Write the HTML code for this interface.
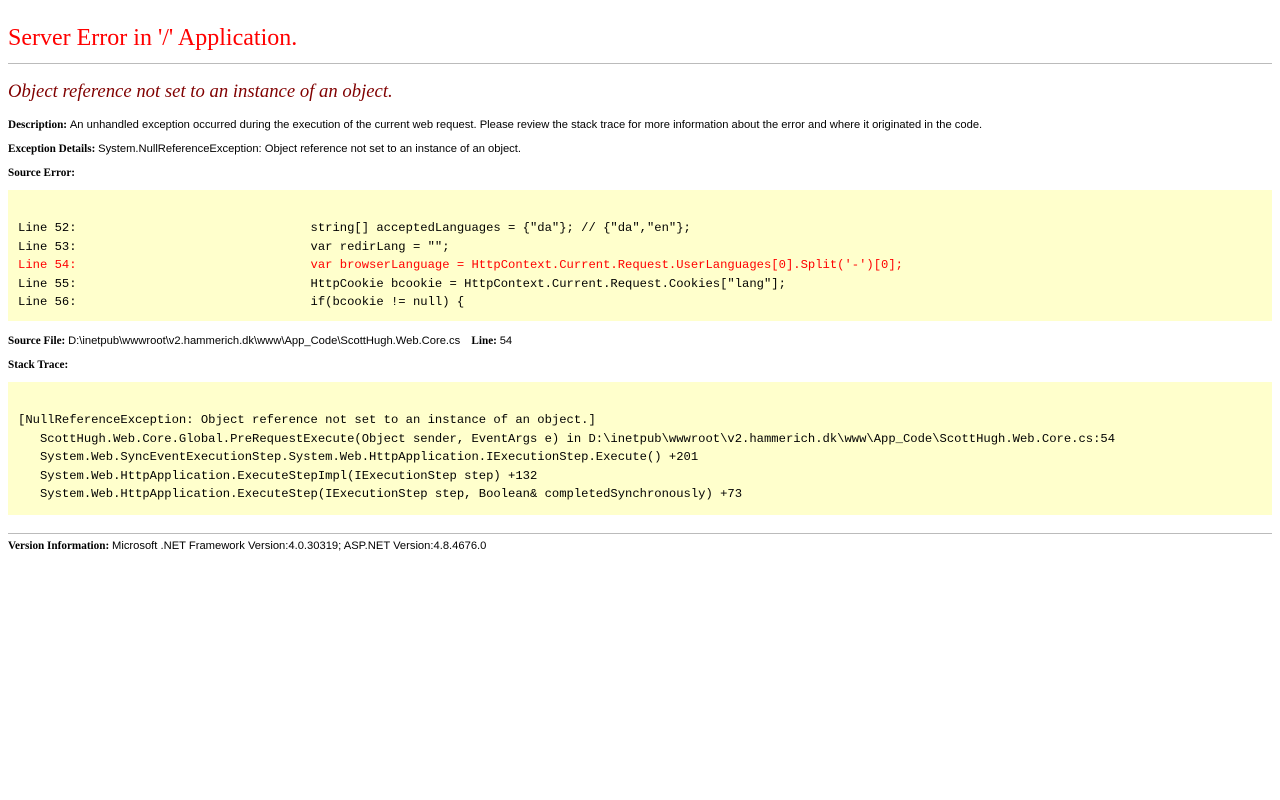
<!DOCTYPE html>
<html><head><meta charset="utf-8"><style>
body{margin:0;background:#fff;color:#000;}
.a{position:absolute;left:8px;white-space:pre;}
h1{position:absolute;left:8px;top:23px;margin:0;font:normal 24px/30px "Liberation Serif",serif;color:red;}
h2{position:absolute;left:8px;top:80px;margin:0;font:italic normal 18.7px/24px "Liberation Serif",serif;color:maroon;}
.hr{position:absolute;left:8px;width:1264px;height:0;border-top:1px solid #bbb;}
.t{font:11.2px/14px "Liberation Sans",sans-serif;}
.t b{font-family:"Liberation Serif",serif;font-weight:bold;}
.box{position:absolute;left:8px;width:1264px;background:#ffffcc;}
.code{position:absolute;left:18px;font:12.2px/18.6px "Liberation Mono",monospace;white-space:pre;color:#000;}
.red{color:red;}
</style></head><body>
<h1>Server Error in '/' Application.</h1>
<div class="hr" style="top:63px"></div>
<h2>Object reference not set to an instance of an object.</h2>
<div class="a t" style="top:118px"><b>Description: </b>An unhandled exception occurred during the execution of the current web request. Please review the stack trace for more information about the error and where it originated in the code.</div>
<div class="a t" style="top:142px"><b>Exception Details: </b>System.NullReferenceException: Object reference not set to an instance of an object.</div>
<div class="a t" style="top:166px"><b>Source Error:</b></div>
<div class="box" style="top:190px;height:131px"></div>
<div class="code" style="top:219px">Line 52:                                string[] acceptedLanguages = {"da"}; // {"da","en"};
Line 53:                                var redirLang = "";
<span class="red">Line 54:                                var browserLanguage = HttpContext.Current.Request.UserLanguages[0].Split('-')[0];</span>
Line 55:                                HttpCookie bcookie = HttpContext.Current.Request.Cookies["lang"];
Line 56:                                if(bcookie != null) {</div>
<div class="a t" style="top:334px"><b>Source File: </b>D:\inetpub\wwwroot\v2.hammerich.dk\www\App_Code\ScottHugh.Web.Core.cs<b>    Line: </b>54</div>
<div class="a t" style="top:358px"><b>Stack Trace:</b></div>
<div class="box" style="top:382px;height:133px"></div>
<div class="code" style="top:411px">[NullReferenceException: Object reference not set to an instance of an object.]
   ScottHugh.Web.Core.Global.PreRequestExecute(Object sender, EventArgs e) in D:\inetpub\wwwroot\v2.hammerich.dk\www\App_Code\ScottHugh.Web.Core.cs:54
   System.Web.SyncEventExecutionStep.System.Web.HttpApplication.IExecutionStep.Execute() +201
   System.Web.HttpApplication.ExecuteStepImpl(IExecutionStep step) +132
   System.Web.HttpApplication.ExecuteStep(IExecutionStep step, Boolean&amp; completedSynchronously) +73</div>
<div class="hr" style="top:533px"></div>
<div class="a t" style="top:539px"><b>Version Information: </b>Microsoft .NET Framework Version:4.0.30319; ASP.NET Version:4.8.4676.0</div>
</body></html>
